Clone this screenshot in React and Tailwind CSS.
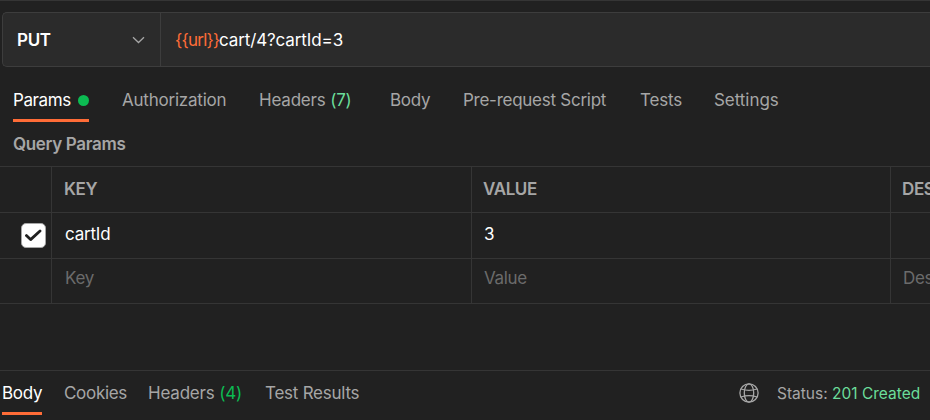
import React from 'react';

const requestTabs = [
  { label: 'Authorization', box: 'w-[137px]', tracking: 'tracking-[-0.22px]' },
  { label: 'Headers', count: '(7)', box: 'w-[131px]', tracking: 'tracking-[-0.2px]' },
  { label: 'Body', box: 'w-[73px]', tracking: 'tracking-[-0.3px]' },
  { label: 'Pre-request Script', box: 'w-[177px]', tracking: 'tracking-[-0.26px]' },
  { label: 'Tests', box: 'w-[74px]', tracking: 'tracking-[-0.2px]' },
  { label: 'Settings', box: 'w-[80px]', tracking: 'tracking-[-0.05px]' },
];

function Chevron() {
  return (
    <svg className="mr-[15px] h-[8px] w-[13px]" viewBox="0 0 13 8" fill="none" stroke="#a6a6a6" strokeWidth="1.3">
      <path d="M1 1.2l5.5 5.3L12 1.2" />
    </svg>
  );
}

function Globe() {
  return (
    <svg className="mr-[18px] h-5 w-5" viewBox="0 0 20 20" fill="none" stroke="#a6a6a6" strokeWidth="1.3">
      <circle cx="10" cy="10" r="9.1" />
      <ellipse cx="10" cy="10" rx="4.7" ry="9.1" />
      <path d="M2 6Q10 8.6 18 6M2 14Q10 11.4 18 14" />
    </svg>
  );
}

function Row({ height, check, cells, cellClass, offset, valueOffset }) {
  return (
    <div className={`flex shrink-0 border-b border-[#353535] ${height}`}>
      <div className="flex w-[52px] shrink-0 items-center border-r border-[#353535] pl-[21px]">{check}</div>
      <div className={`w-[420px] shrink-0 border-r border-[#353535] ${offset} ${cellClass}`}>{cells[0]}</div>
      <div className={`w-[419px] shrink-0 border-r border-[#353535] ${valueOffset} ${cellClass}`}>{cells[1]}</div>
      <div className={`min-w-0 overflow-hidden ${valueOffset} ${cellClass}`}>{cells[2]}</div>
    </div>
  );
}

export default function App() {
  return (
    <div className="flex h-[420px] w-[930px] flex-col overflow-hidden whitespace-nowrap border-t border-[#353535] bg-[#212121] font-['Inter','Liberation_Sans',sans-serif] text-[17px] leading-[24px] text-[#a6a6a6]">
      <div className="ml-[2px] mt-[11px] flex h-[55px] shrink-0 rounded-l-[5px] border border-r-0 border-[#3d3d3d] bg-[#2b2b2b]">
        <div className="flex w-[158px] shrink-0 items-center justify-between border-r border-[#3d3d3d] pl-[14px]">
          <span className="text-[17px] font-semibold tracking-[-0.3px] text-white">PUT</span>
          <Chevron />
        </div>
        <div className="flex items-center pl-[14px] text-white">
          <span className="w-[44px] tracking-[-0.75px] text-[#ff6c37]">{'{{url}}'}</span>
          <span className="tracking-[-0.12px]">cart/4?cartId=3</span>
        </div>
      </div>

      <div className="flex h-[55px] shrink-0 pl-[13px]">
        <div className="mr-[33px] flex w-[76px] shrink-0 justify-between border-b-[3px] border-[#ff6c37] pt-[21px] text-white">
          <span className="tracking-[-0.4px]">Params</span>
          <span className="mt-[7px] h-[11px] w-[11px] rounded-full bg-[#0cbb52]" />
        </div>
        {requestTabs.map((t) => (
          <div key={t.label} className={`shrink-0 pt-[21px] ${t.box} ${t.tracking}`}>
            {t.label}
            {t.count && <span className="text-[#6bdd9a]"> {t.count}</span>}
          </div>
        ))}
      </div>

      <div className="h-[45px] shrink-0 border-b border-[#353535] pl-[13px] pt-[10px] font-semibold tracking-[-0.34px]">Query Params</div>

      <Row
        height="h-[46px]"
        offset="pl-3"
        valueOffset="pl-[11px]"
        cellClass="pt-[10px] font-semibold tracking-[-0.4px]"
        cells={['KEY', 'VALUE', 'DESCRIPTION']}
      />
      <Row
        height="h-[46px]"
        offset="pl-[13px]"
        valueOffset="pl-3"
        cellClass="pt-[9px] tracking-[-0.2px] text-white"
        cells={['cartId', '3', '']}
        check={
          <span className="flex h-[25px] w-[25px] items-center justify-center rounded-[5px] border border-[#a6a6a6] bg-white">
            <svg className="h-[15px] w-[17px]" viewBox="0 0 17 15" fill="none" stroke="#212121" strokeWidth="2.8" strokeLinecap="round" strokeLinejoin="round">
              <path d="M1.4 7.6l4.2 4L15 3" />
            </svg>
          </span>
        }
      />
      <Row
        height="h-[45px]"
        offset="pl-[13px]"
        valueOffset="pl-3"
        cellClass="pt-[7px] tracking-[-0.35px] text-[#6b6b6b]"
        cells={['Key', 'Value', 'Description']}
      />

      <div className="mt-[66px] flex h-[50px] shrink-0 border-t border-[#353535] pl-[2px]">
        <div className="mr-[22px] h-[44px] w-[40px] shrink-0 border-b-[3px] border-[#ff6c37] pt-[10px] tracking-[-0.3px] text-white">Body</div>
        <div className="w-[84px] shrink-0 pt-[10px] tracking-[-0.3px]">Cookies</div>
        <div className="w-[117px] shrink-0 pt-[10px] tracking-[-0.2px]">
          Headers <span className="text-[#0cbb52]">(4)</span>
        </div>
        <div className="w-[474px] shrink-0 pt-[10px] tracking-[-0.24px]">Test Results</div>
        <div className="flex h-[44px] items-center text-[15.5px]">
          <Globe />
          <span className="pt-px">
            Status: <span className="text-[#6bdd9a]">201 Created</span>
          </span>
        </div>
      </div>
    </div>
  );
}
